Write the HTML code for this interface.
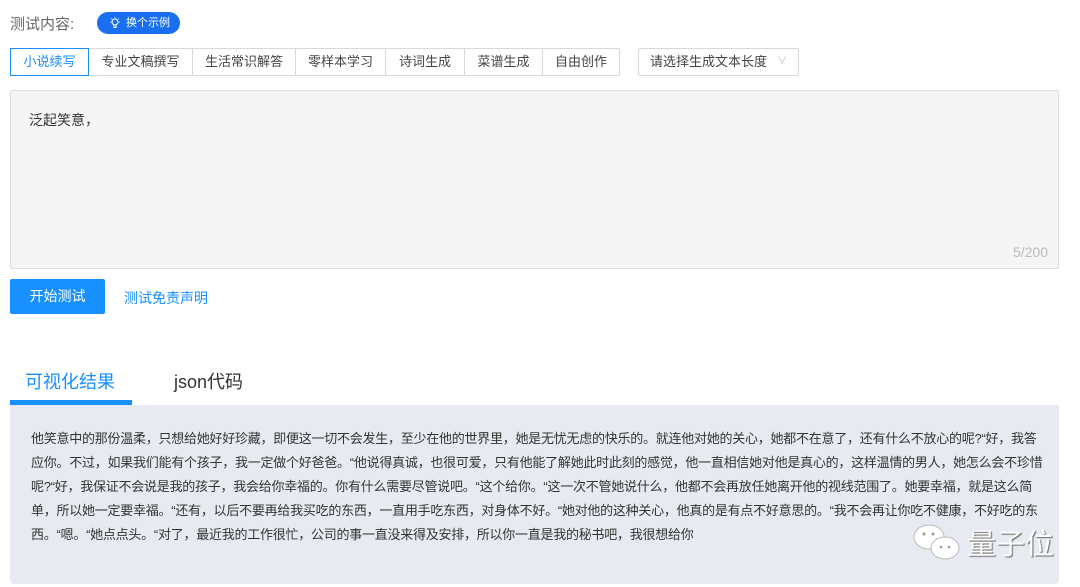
<!DOCTYPE html><html><head><meta charset="utf-8"><style>
*{box-sizing:border-box;margin:0;padding:0}
body{width:1080px;height:587px;background:#fff;font-family:"Liberation Sans","Noto Sans CJK SC",sans-serif;color:#333;position:relative;overflow:hidden}
.a{position:absolute}
.tab{position:absolute;top:48px;height:28px;border:1px solid #d9d9d9;font-size:13px;color:#444;text-align:center;line-height:26px;background:#fff}
</style></head><body>
<div class="a" style="left:10px;top:13px;font-size:15px;color:#666">测试内容:</div>
<div class="a" style="left:97px;top:12px;width:83px;height:22px;border-radius:11px;background:#1a6ff0;color:#fff;font-size:11px;line-height:22px;padding-left:29px">换个示例
<svg class="a" style="left:11px;top:4px" width="14" height="14" viewBox="0 0 14 14" fill="none" stroke="#fff" stroke-width="1.1"><circle cx="7" cy="6" r="3"/><path d="M6 9.5v2h2v-2M7 1v0.8M2 6h0.8M11.2 6h0.8M3.3 2.5l.6.6M10.7 2.5l-.6.6"/></svg></div>
<div class="tab" style="left:10px;width:79px;border-color:#1890ff;color:#1890ff;z-index:2">小说续写</div>
<div class="tab" style="left:88px;width:105px">专业文稿撰写</div>
<div class="tab" style="left:192px;width:104px">生活常识解答</div>
<div class="tab" style="left:295px;width:91px">零样本学习</div>
<div class="tab" style="left:385px;width:80px">诗词生成</div>
<div class="tab" style="left:464px;width:79px">菜谱生成</div>
<div class="tab" style="left:542px;width:78px">自由创作</div>
<div class="tab" style="left:638px;width:161px;text-align:left;padding-left:11px;border-radius:2px">请选择生成文本长度<span class="a" style="right:11px;top:0;color:#bbb;font-size:10px">∨</span></div>
<div class="a" style="left:10px;top:90px;width:1049px;height:179px;background:#f5f5f5;border:1px solid #ddd;border-radius:2px">
<div class="a" style="left:18px;top:19px;font-size:14px;color:#333">泛起笑意，</div>
<div class="a" style="right:10px;bottom:8px;font-size:14px;color:#bbb">5/200</div></div>
<div class="a" style="left:10px;top:279px;width:95px;height:35px;background:#1890ff;color:#fff;border-radius:2px;font-size:14px;line-height:35px;text-align:center">开始测试</div>
<div class="a" style="left:124px;top:288px;font-size:14px;color:#1890ff">测试免责声明</div>
<div class="a" style="left:25px;top:368px;font-size:18px;color:#1890ff">可视化结果</div>
<div class="a" style="left:174px;top:368px;font-size:18px;color:#333">json代码</div>
<div class="a" style="left:10px;top:400px;width:122px;height:5px;background:#1890ff"></div>
<div class="a" style="left:10px;top:405px;width:1049px;height:179px;background:#e7eaf0;border-radius:0 0 4px 4px">
<div class="a" style="left:21px;top:22px;width:1016px;font-size:13px;line-height:24px;color:#333;letter-spacing:-0.25px">他笑意中的那份温柔，只想给她好好珍藏，即便这一切不会发生，至少在他的世界里，她是无忧无虑的快乐的。就连他对她的关心，她都不在意了，还有什么不放心的呢?“好，我答应你。不过，如果我们能有个孩子，我一定做个好爸爸。“他说得真诚，也很可爱，只有他能了解她此时此刻的感觉，他一直相信她对他是真心的，这样温情的男人，她怎么会不珍惜呢?“好，我保证不会说是我的孩子，我会给你幸福的。你有什么需要尽管说吧。“这个给你。“这一次不管她说什么，他都不会再放任她离开他的视线范围了。她要幸福，就是这么简单，所以她一定要幸福。“还有，以后不要再给我买吃的东西，一直用手吃东西，对身体不好。“她对他的这种关心，他真的是有点不好意思的。“我不会再让你吃不健康，不好吃的东西。“嗯。“她点点头。“对了，最近我的工作很忙，公司的事一直没来得及安排，所以你一直是我的秘书吧，我很想给你</div>
<svg class="a" style="left:902px;top:118px" width="54" height="40" viewBox="0 0 54 40"><ellipse cx="17" cy="14" rx="15" ry="12" fill="#fff" stroke="#bbb"/><ellipse cx="33" cy="25" rx="14" ry="11" fill="#fff" stroke="#bbb"/><circle cx="12" cy="11" r="1.5" fill="#999"/><circle cx="21" cy="11" r="1.5" fill="#999"/><circle cx="29" cy="24" r="1.3" fill="#999"/><circle cx="37" cy="24" r="1.3" fill="#999"/></svg>
<div class="a" style="left:957px;top:116px;font-size:29px;color:#fff;text-shadow:1px 1px 1px #666">量子位</div>
</div>
</body></html>
